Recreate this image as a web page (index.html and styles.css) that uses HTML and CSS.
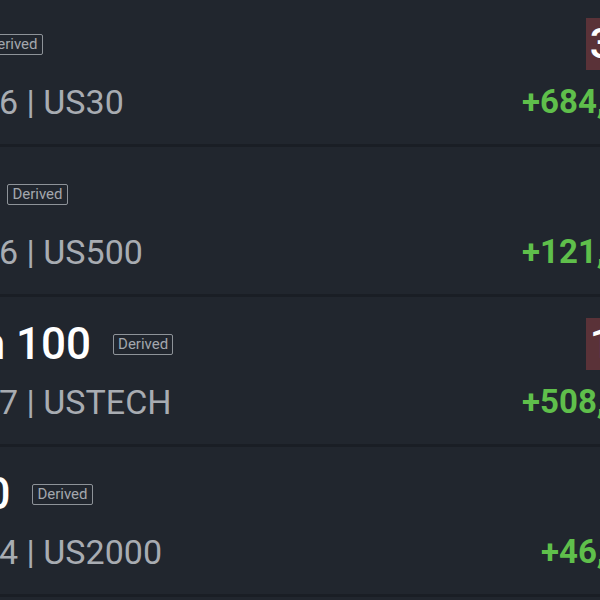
FILE: index.html
```html
<!DOCTYPE html>
<html lang="en">
<head>
<meta charset="utf-8">
<title>Indices</title>
<link rel="stylesheet" href="styles.css">
</head>
<body>
<div class="list">
  <div class="row">
    <div class="head"><span class="name">US 30</span><span class="badge">Derived</span></div>
    <div class="price down">39,185.4</div>
    <div class="sub">Spread: 12.6 <span class="pipe">|</span> US30</div>
    <div class="change">+684,3 (+1.78%)</div>
  </div>
  <div class="row">
    <div class="head"><span class="name">US 500</span><span class="badge">Derived</span></div>
    <div class="price">5,284.6</div>
    <div class="sub">Spread: 10.6 <span class="pipe">|</span> US500</div>
    <div class="change">+121,5 (+2.36%)</div>
  </div>
  <div class="row">
    <div class="head"><span class="name">US Tech 100</span><span class="badge">Derived</span></div>
    <div class="price down">18,265.7</div>
    <div class="sub">Spread: 12.7 <span class="pipe">|</span> USTECH</div>
    <div class="change">+508,2 (+2.86%)</div>
  </div>
  <div class="row">
    <div class="head"><span class="name">US 2000</span><span class="badge">Derived</span></div>
    <div class="price">2,041.3</div>
    <div class="sub">Spread: 10.4 <span class="pipe">|</span> US2000</div>
    <div class="change">+46,3 (+2.31%)</div>
  </div>
</div>
</body>
</html>
```
FILE: styles.css
```css
html, body {
  margin: 0;
  padding: 0;
}
body {
  background: #21262e;
  width: 600px;
  height: 600px;
  overflow: hidden;
  font-family: Roboto, "Liberation Sans", sans-serif;
}
.list {
  margin-left: -163px;
  margin-top: -3px;
  width: 927px;
}
.row {
  display: grid;
  grid-template-columns: 1fr auto;
  grid-template-rows: 52px 40px;
  row-gap: 12px;
  padding: 21px 0 22px 0;
  border-bottom: 3px solid #1a1e25;
}
.head {
  display: flex;
  align-items: center;
  gap: 22px;
  margin-left: 7px;
}
.name {
  font-size: 44px;
  font-weight: 500;
  color: #ffffff;
  line-height: 52px;
  white-space: nowrap;
}
.badge {
  font-size: 15px;
  color: #a3a7ad;
  border: 1.5px solid #8e9399;
  border-radius: 2px;
  padding: 0 4px;
  line-height: 19px;
}
.sub {
  font-size: 34px;
  color: #a8acb2;
  line-height: 40px;
  white-space: nowrap;
  margin-left: -8px;
}
.price {
  justify-self: end;
  font-size: 42px;
  font-weight: 500;
  color: #ffffff;
  line-height: 52px;
  padding: 0 4px;
  margin-right: 6px;
  white-space: nowrap;
}
.price.down {
  background: #5a3238;
}
.change {
  justify-self: end;
  font-size: 33px;
  font-weight: 700;
  color: #5fbf4b;
  line-height: 40px;
  white-space: nowrap;
}
```
